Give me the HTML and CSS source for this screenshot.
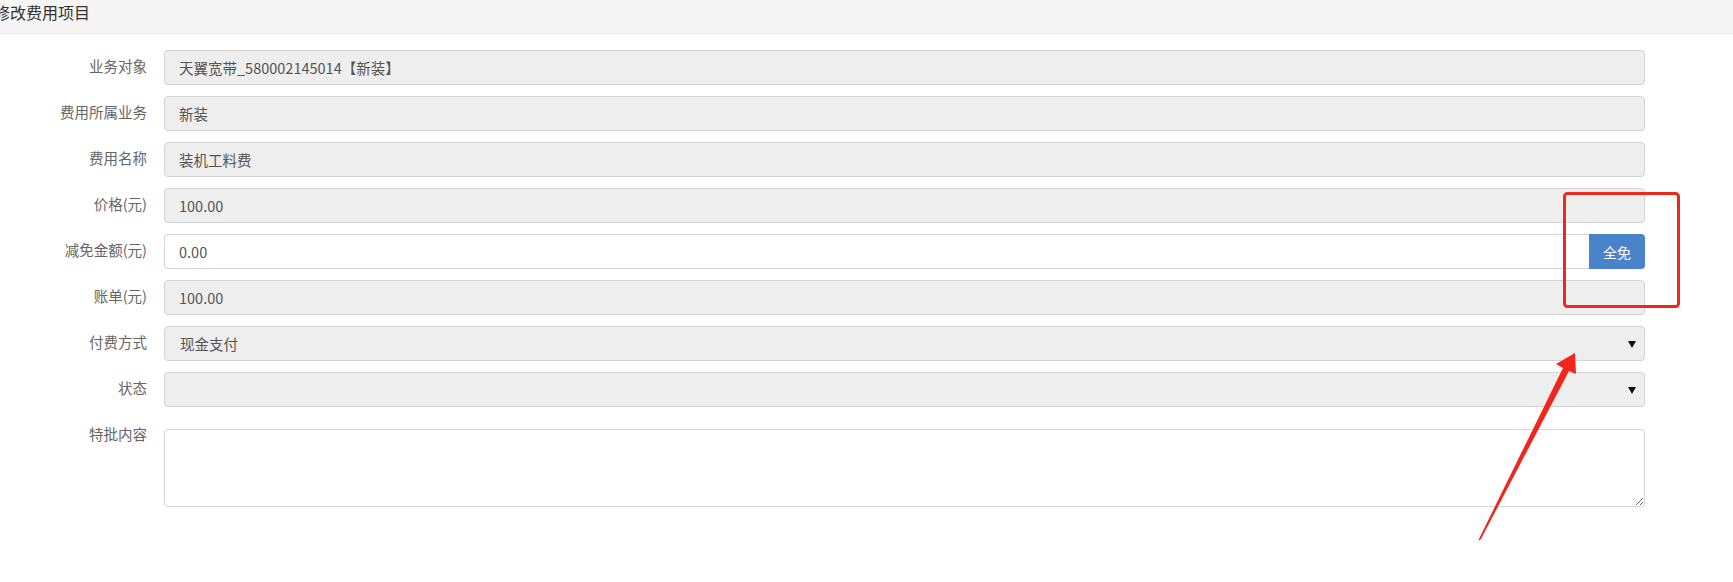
FILE: index.html
```html
<!DOCTYPE html>
<html lang="zh-CN">
<head>
<meta charset="utf-8">
<title>修改费用项目</title>
<link rel="stylesheet" href="styles.css">
</head>
<body>
<div class="panel">
  <div class="panel-head">修改费用项目</div>
  <form class="form">
    <div class="row">
      <label class="lbl">业务对象</label>
      <input class="ctl" type="text" value="天翼宽带_580002145014【新装】" readonly>
    </div>
    <div class="row">
      <label class="lbl">费用所属业务</label>
      <input class="ctl" type="text" value="新装" readonly>
    </div>
    <div class="row">
      <label class="lbl">费用名称</label>
      <input class="ctl" type="text" value="装机工料费" readonly>
    </div>
    <div class="row">
      <label class="lbl">价格(元)</label>
      <input class="ctl" type="text" value="100.00" readonly>
    </div>
    <div class="row">
      <label class="lbl">减免金额(元)</label>
      <div class="group">
        <input class="ctl ctl-edit" type="text" value="0.00">
        <button class="btn" type="button">全免</button>
      </div>
    </div>
    <div class="row">
      <label class="lbl">账单(元)</label>
      <input class="ctl" type="text" value="100.00" readonly>
    </div>
    <div class="row">
      <label class="lbl">付费方式</label>
      <div class="sel-wrap">
        <select class="ctl sel" disabled>
          <option>现金支付</option>
        </select>
      </div>
    </div>
    <div class="row">
      <label class="lbl">状态</label>
      <div class="sel-wrap">
        <select class="ctl sel" disabled>
          <option></option>
        </select>
      </div>
    </div>
    <div class="row">
      <label class="lbl">特批内容</label>
      <textarea class="ctl area"></textarea>
    </div>
  </form>
</div>
<svg class="annot" width="1733" height="582" viewBox="0 0 1733 582" xmlns="http://www.w3.org/2000/svg">
  <rect x="1564.5" y="193.5" width="114" height="113" rx="3" fill="none" stroke="#ec2a1c" stroke-width="3"/>
  <polygon points="1478,541 1563,368 1556,364 1575,353 1576,374 1569,371 1481,539" fill="#f2251a"/>
</svg>
</body>
</html>
```

FILE: styles.css
```css
html, body {
  margin: 0;
  padding: 0;
  background: #ffffff;
}
body {
  width: 1733px;
  height: 582px;
  overflow: hidden;
  position: relative;
  font-family: "Noto Sans CJK SC", "Open Sans", sans-serif;
  color: #555;
}
.panel-head {
  height: 33px;
  background: #f5f5f5;
  border-bottom: 1px solid #e6e6e6;
  font-size: 16px;
  line-height: 25px;
  padding-left: 0;
  text-indent: -6px;
  color: #333;
  overflow: hidden;
  white-space: nowrap;
}
.form {
  padding-top: 16px;
  width: 1645px;
}
.row {
  display: flex;
  align-items: flex-start;
  margin-bottom: 11px;
}
.lbl {
  flex: 0 0 147px;
  width: 147px;
  text-align: right;
  font-size: 14.5px;
  line-height: 20px;
  padding-top: 6px;
  margin-right: 17px;
  color: #666;
  white-space: nowrap;
}
.ctl {
  flex: 1 1 auto;
  box-sizing: border-box;
  height: 35px;
  margin: 0;
  border: 1px solid #d4d4d4;
  border-radius: 4px;
  background: #eeeeee;
  padding: 0 14px;
  font-family: "Noto Sans CJK SC", "Open Sans", sans-serif;
  font-size: 14.5px;
  color: #555;
  outline: none;
  min-width: 0;
}
.ctl-edit {
  background: #ffffff;
  border-radius: 4px 0 0 4px;
  border-right: 0;
}
.group {
  flex: 1 1 auto;
  display: flex;
}
.btn {
  flex: 0 0 56px;
  height: 35px;
  border: 0;
  border-radius: 0 4px 4px 0;
  background: #4b83ca;
  color: #ffffff;
  font-family: "Noto Sans CJK SC", sans-serif;
  font-size: 14px;
  padding: 0;
}
.sel-wrap {
  flex: 1 1 auto;
  display: flex;
  position: relative;
}
.sel {
  appearance: none;
  -webkit-appearance: none;
  padding-left: 15px;
  opacity: 1;
  color: #555;
}
.sel-wrap::after {
  content: "";
  position: absolute;
  right: 9px;
  top: 15px;
  border-left: 4px solid transparent;
  border-right: 4px solid transparent;
  border-top: 7px solid #111;
}
.area {
  height: 78px;
  margin-top: 11px;
  background: #ffffff;
  padding: 6px 14px;
  resize: both;
}
.annot {
  position: absolute;
  left: 0;
  top: 0;
  pointer-events: none;
}
```
